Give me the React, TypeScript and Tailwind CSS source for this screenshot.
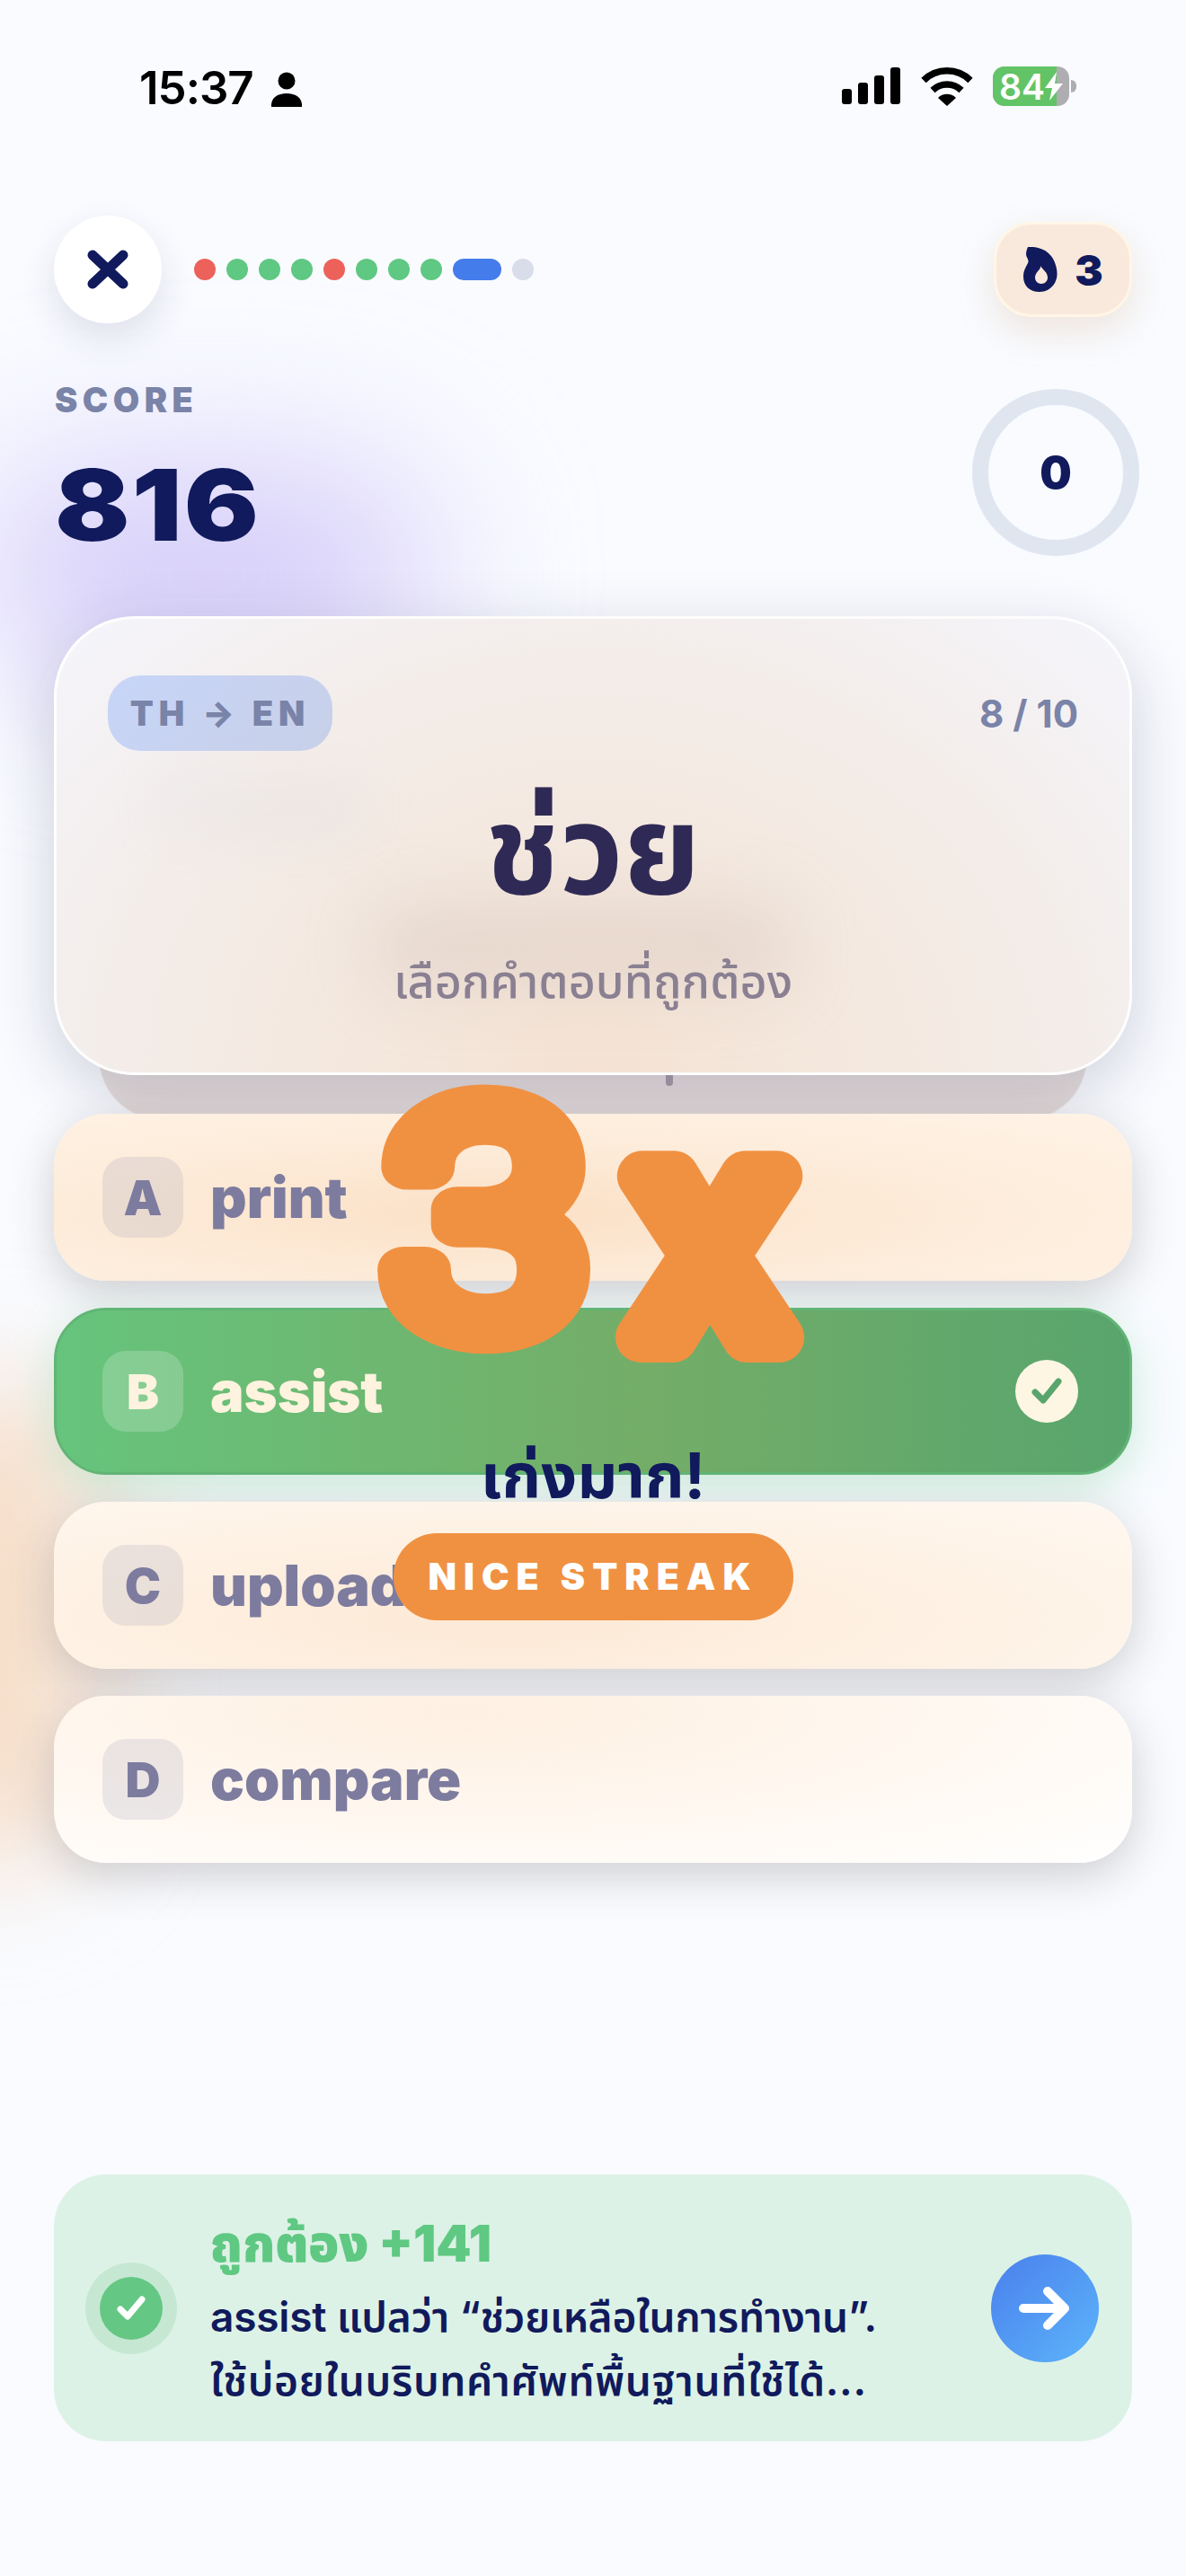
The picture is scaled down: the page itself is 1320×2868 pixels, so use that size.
import React from "react";

const dots = ["r", "g", "g", "g", "r", "g", "g", "g", "a", "n"];

const options = [
  { key: "A", label: "print", tone: "bg-[radial-gradient(ellipse_at_42%_60%,#fbe0c6,#fdecda_50%,#fff3e7)]" },
  { key: "B", label: "assist", tone: "" },
  { key: "C", label: "upload", tone: "bg-[radial-gradient(ellipse_at_42%_70%,#fde9d6,#fef2e5_55%,#fff8f1)]" },
  { key: "D", label: "compare", tone: "bg-[radial-gradient(ellipse_at_38%_10%,#fef0e2,#fff8f1_55%,#ffffff)]" },
];

const StatusBar = () => (
  <div className="flex h-[190px] shrink-0 items-start justify-between pl-[155px] pr-[122px] pt-[70px]">
    <div className="flex items-center gap-[19px]">
      <span className="text-[51px] font-semibold leading-[56px] tracking-[-1px] text-black">15:37</span>
      <svg width="36" height="39" viewBox="0 0 36 39" className="mt-[2px]">
        <circle cx="18" cy="10" r="9.5" fill="#000" />
        <path d="M1 39c-1-10 7-15 17-15s18 5 17 15z" fill="#000" />
      </svg>
    </div>
    <div className="mt-[4px] flex items-center">
      <svg width="66" height="42" viewBox="0 0 66 42" className="mr-[22px]">
        <rect x="0" y="24" width="11" height="17" rx="3" fill="#000" />
        <rect x="18" y="17" width="11" height="24" rx="3" fill="#000" />
        <rect x="36" y="9" width="11" height="32" rx="3" fill="#000" />
        <rect x="54" y="0" width="11" height="41" rx="3" fill="#000" />
      </svg>
      <svg width="58" height="43" viewBox="0 0 58 43" className="mr-[22px]">
        <path d="M3 14.5A37 37 0 0 1 55 14.5" fill="none" stroke="#000" strokeWidth="7.5" />
        <path d="M13 25.5A23 23 0 0 1 45 25.5" fill="none" stroke="#000" strokeWidth="7.5" />
        <path d="M19 34A14 14 0 0 1 39 34L29 43Z" fill="#000" />
      </svg>
      <div className="relative flex h-[44px] w-[85px] items-center overflow-hidden rounded-[13px] bg-[#aeaeb2] pl-[7px]">
        <div className="absolute inset-y-0 left-0 w-[71px] bg-[#62c466]" />
        <span className="relative text-[39px] font-semibold leading-none text-white">84</span>
        <svg width="22" height="32" viewBox="0 0 22 32" className="relative -ml-[1px]">
          <path d="M14 0 1 18h8l-3 14 15-19h-9z" fill="#fff" />
        </svg>
      </div>
      <div className="ml-[2px] h-[14px] w-[6px] rounded-r-full bg-[#aeaeb2]" />
    </div>
  </div>
);

const Header = () => (
  <div className="mt-[50px] flex h-[120px] shrink-0 items-center justify-between px-[60px]">
    <div className="flex items-center gap-[36px]">
      <div className="flex h-[120px] w-[120px] items-center justify-center rounded-full bg-white shadow-[0_16px_40px_rgba(40,45,90,0.12)]">
        <svg width="46" height="44" viewBox="0 0 46 44">
          <path d="M6 6 40 38M40 6 6 38" stroke="#101a5c" strokeWidth="11" strokeLinecap="round" />
        </svg>
      </div>
      <div className="flex items-center gap-[12px]">
        {dots.map((d, i) =>
          d === "a" ? (
            <div key={i} className="h-[24px] w-[54px] rounded-full bg-[#457cec]" />
          ) : (
            <div
              key={i}
              className={
                d === "r"
                  ? "h-[24px] w-[24px] rounded-full bg-[#ec625b]"
                  : d === "g"
                    ? "h-[24px] w-[24px] rounded-full bg-[#5fc882]"
                    : "h-[24px] w-[24px] rounded-full bg-[#d9dde9]"
              }
            />
          ),
        )}
      </div>
    </div>
    <div className="flex h-[106px] w-[154px] items-center justify-center gap-[18px] rounded-[42px] border-[3px] border-[#fff6e6] bg-[#f9e9dc] shadow-[0_16px_40px_rgba(200,150,100,0.22)]">
      <svg width="40" height="50" viewBox="0 0 40 50">
        <path
          fillRule="evenodd"
          fill="#101a5c"
          d="M6 0c12-1 24 4 29 15 4 9 5 18 1 25-4 7-11 10-17 10C9 50 1 44 1 33c0-7 3-11 5-15C8 14 4 12 4 8c0-3 1-6 2-8ZM20 21c1 4-6 7-6 13 0 4 3 7 7 7s7-3 7-7c0-6-5-8-8-13Z"
        />
      </svg>
      <span className="text-[47px] font-black leading-none text-[#101a5c]">3</span>
    </div>
  </div>
);

const ScoreRow = () => (
  <div className="mt-[73px] flex h-[186px] shrink-0 justify-between pl-[61px] pr-[52px]">
    <div className="-mt-[7px]">
      <div className="text-[38px] font-black leading-[38px] tracking-[5.5px] text-[#7a83a8]">SCORE</div>
      <div className="mt-[44px] origin-left scale-x-[1.12] text-[110px] font-black leading-[108px] tracking-[2px] text-[#101a5c]">
        816
      </div>
    </div>
    <div className="flex h-[186px] w-[186px] items-center justify-center rounded-full border-[18px] border-[#dfe6f0]">
      <span className="text-[50px] font-black leading-none text-[#101a5c]">0</span>
    </div>
  </div>
);

const QuestionCard = () => (
  <div className="relative mx-[60px] mt-[67px] h-[511px] shrink-0">
    <div className="absolute inset-x-[50px] -bottom-[50px] h-[120px] rounded-b-[70px] border border-white/40 bg-[#d8cbc7]/60" />
    <div className="absolute bottom-[-12px] left-[681px] h-[14px] w-[8px] rounded-b-full bg-[#8a8092]/70" />
    <div className="absolute inset-0 flex flex-col rounded-[90px] border-[3px] border-white/90 bg-[radial-gradient(ellipse_at_50%_100%,#f5e3d4,#f3ebe5_55%,#f5f5fc)] px-[57px] pt-[63px] shadow-[0_20px_70px_rgba(40,40,80,0.2)]">
      <div className="absolute left-[350px] top-[320px] h-[90px] w-[470px] rounded-full bg-[#cbb9b4]/35 blur-[36px]" />
      <div className="absolute left-[120px] top-[185px] h-[50px] w-[220px] rounded-full bg-[#cfcfdc]/20 blur-[30px]" />
      <div className="relative flex items-center justify-between">
        <div className="flex h-[84px] w-[250px] items-center justify-center rounded-[36px] bg-[linear-gradient(135deg,#c7d5f8,#c8d0e8)] text-[38px] font-black tracking-[6px] text-[#7a83a8]">
          TH → EN
        </div>
        <span className="text-[42px] font-bold text-[#7a83a8]">8 / 10</span>
      </div>
      <div className="relative mt-[29px] text-center text-[138px] font-bold leading-[160px] text-[#2f2a55]">ช่วย</div>
      <div className="relative mt-[36px] text-center text-[52px] font-medium leading-[64px] text-[#8a8092]">
        เลือกคำตอบที่ถูกต้อง
      </div>
    </div>
  </div>
);

const OptionRow = ({ k, label, tone }: { k: string; label: string; tone: string }) => {
  const correct = k === "B";
  return (
    <div
      className={
        correct
          ? "flex h-[186px] items-center rounded-[58px] border-[3px] border-[#62b576] bg-[linear-gradient(90deg,#66c47c,#74ad68_55%,#58a56d)] pl-[51px] pr-[57px] shadow-[0_14px_50px_rgba(95,200,130,0.3)]"
          : "flex h-[186px] items-center rounded-[58px] pl-[54px] pr-[60px] shadow-[0_14px_50px_rgba(60,50,50,0.22)] " + tone
      }
    >
      <div
        className={
          correct
            ? "flex h-[90px] w-[90px] items-center justify-center rounded-[26px] bg-white/20 text-[54px] font-black text-[#fdf3df]"
            : "flex h-[90px] w-[90px] items-center justify-center rounded-[26px] bg-[#7a7fa8]/15 text-[54px] font-black text-[#7d7c9f]"
        }
      >
        {k}
      </div>
      <span
        className={
          correct
            ? "ml-[30px] text-[63px] font-black text-[#fdf3df]"
            : "ml-[30px] text-[63px] font-black text-[#7d7c9f]"
        }
      >
        {label}
      </span>
      {correct && (
        <div className="ml-auto flex h-[70px] w-[70px] items-center justify-center rounded-full bg-[#fdf6e3]">
          <svg width="36" height="32" viewBox="0 0 36 32">
            <path d="M5 17 14 26 31 5" fill="none" stroke="#58a56d" strokeWidth="7" strokeLinecap="round" strokeLinejoin="round" />
          </svg>
        </div>
      )}
    </div>
  );
};

const Feedback = () => (
  <div className="mx-[60px] mb-[150px] mt-auto flex h-[297px] shrink-0 items-center rounded-[58px] bg-[#ddf2e6] pl-[35px] pr-[37px]">
    <div className="flex h-[102px] w-[102px] shrink-0 items-center justify-center rounded-full bg-[#c6e8d3]">
      <div className="flex h-[70px] w-[70px] items-center justify-center rounded-full bg-[#65c784]">
        <svg width="36" height="32" viewBox="0 0 36 32">
          <path d="M6 17 14 25 30 6" fill="none" stroke="#fff" strokeWidth="7" strokeLinecap="round" strokeLinejoin="round" />
        </svg>
      </div>
    </div>
    <div className="ml-[37px] min-w-0 flex-1 pt-[9px]">
      <div className="text-[56px] font-black leading-[70px] text-[#5fc882]">ถูกต้อง +141</div>
      <div className="mt-[11px] text-[46px] font-semibold leading-[71px] text-[#101a5c]">
        <div className="tracking-[-0.2px]">assist แปลว่า “ช่วยเหลือในการทำงาน”.</div>
        <div className="tracking-[0.7px]">ใช้บ่อยในบริบทคำศัพท์พื้นฐานที่ใช้ได้...</div>
      </div>
    </div>
    <div className="flex h-[120px] w-[120px] shrink-0 items-center justify-center rounded-full bg-[linear-gradient(135deg,#4a80ec,#5cb4fb)]">
      <svg width="60" height="50" viewBox="0 0 60 50">
        <path d="M6 25H52M33 6 52 25 33 44" fill="none" stroke="#fff" strokeWidth="10" strokeLinecap="round" strokeLinejoin="round" />
      </svg>
    </div>
  </div>
);

export default function App() {
  return (
    <div
      className="relative flex h-[2868px] w-[1320px] flex-col overflow-hidden bg-[#f9fbff] [font-optical-sizing:none]"
      style={{ fontFamily: 'Inter, "Noto Sans Thai", "Noto Sans", "DejaVu Sans", sans-serif' }}
    >
      {/* background glows */}
      <div className="absolute left-[-20px] top-[520px] h-[240px] w-[500px] rounded-full bg-[#c4b8f6]/70 blur-[90px]" />
      <div className="absolute left-[-140px] top-[1540px] h-[540px] w-[240px] rounded-full bg-[#f5c8a0]/60 blur-[70px]" />

      <div className="relative flex h-full flex-col">
        <StatusBar />
        <Header />
        <ScoreRow />
        <QuestionCard />
        <div className="relative mt-[43px] flex shrink-0 flex-col gap-[30px] px-[60px]">
          {options.map((o) => (
            <OptionRow key={o.key} k={o.key} label={o.label} tone={o.tone} />
          ))}
        </div>
        <Feedback />
      </div>

      {/* streak overlay */}
      <div className="absolute left-[400px] top-[1190px] flex w-[520px] flex-col items-center">
        <svg width="520" height="350" viewBox="0 0 520 350" className="overflow-visible">
          <g fontFamily="Roboto, sans-serif" fill="#f09142" stroke="#f09142" strokeLinejoin="round" strokeLinecap="round">
            <text transform="translate(30 289) scale(1.17 1)" fontWeight="300" fontSize="342" strokeWidth="50">
              3
            </text>
            <text x="306" y="299" fontWeight="400" fontSize="340" strokeWidth="56">
              x
            </text>
          </g>
        </svg>
      </div>
      <div className="absolute left-[400px] top-[1593px] flex w-[520px] flex-col items-center">
        <div className="text-[70px] font-bold leading-[100px] text-[#101a5c]">เก่งมาก!</div>
        <div className="mt-[14px] flex h-[97px] w-[445px] items-center justify-center rounded-[48px] bg-[#f09142] text-[41px] font-black tracking-[8px] text-white">
          NICE STREAK
        </div>
      </div>
    </div>
  );
}
